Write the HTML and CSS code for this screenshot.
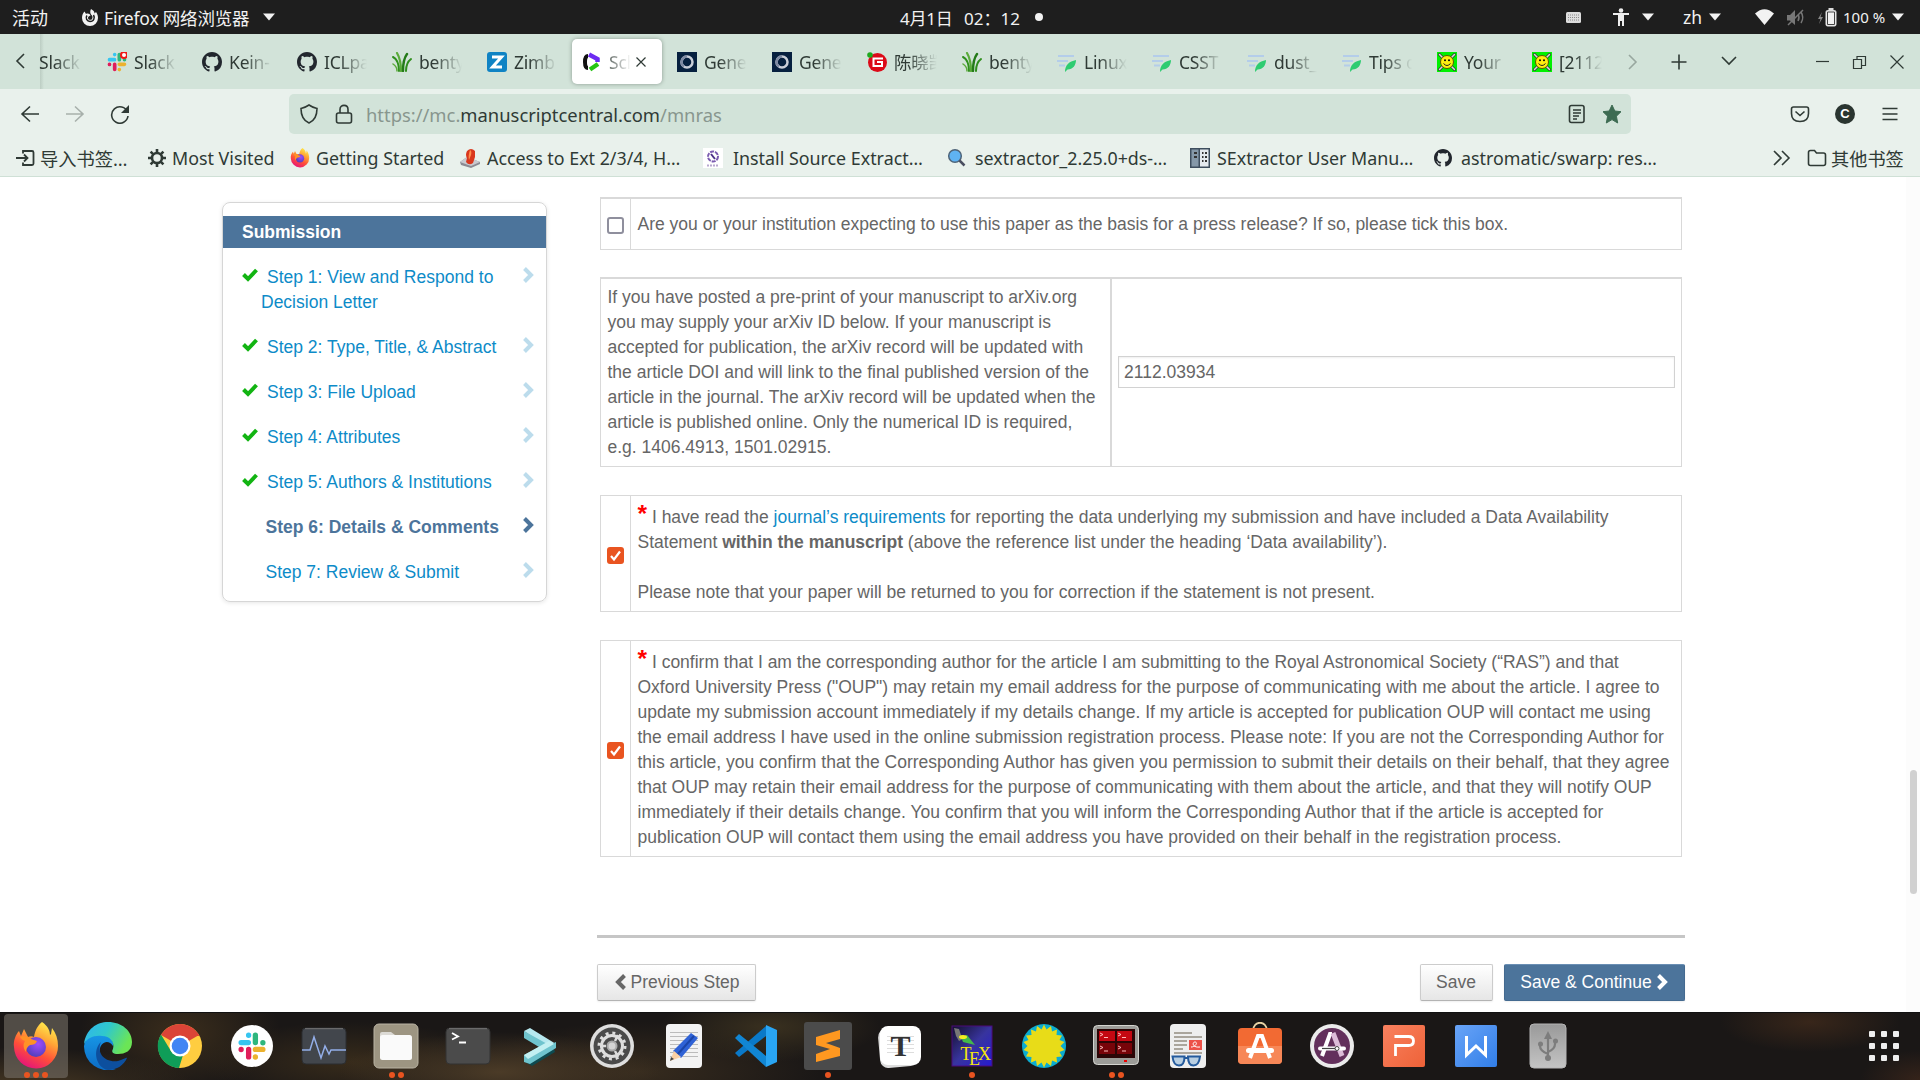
FILE: index.html
```html
<!DOCTYPE html>
<html lang="zh">
<head>
<meta charset="utf-8">
<title>ScholarOne Manuscripts</title>
<link rel="stylesheet" href="styles.css">
</head>
<body>
<svg class="defs" width="0" height="0">
  <symbol id="github" viewBox="0 0 16 16"><path fill="#22272e" d="M8 0C3.58 0 0 3.58 0 8c0 3.54 2.29 6.53 5.47 7.59.4.07.55-.17.55-.38 0-.19-.01-.82-.01-1.49-2.01.37-2.53-.49-2.69-.94-.09-.23-.48-.94-.82-1.13-.28-.15-.68-.52-.01-.53.63-.01 1.08.58 1.23.82.72 1.21 1.87.87 2.33.66.07-.52.28-.87.51-1.07-1.78-.2-3.64-.89-3.64-3.95 0-.87.31-1.59.82-2.15-.08-.2-.36-1.02.08-2.12 0 0 .67-.21 2.2.82.64-.18 1.32-.27 2-.27s1.36.09 2 .27c1.53-1.04 2.2-.82 2.2-.82.44 1.1.16 1.92.08 2.12.51.56.82 1.27.82 2.15 0 3.07-1.87 3.75-3.65 3.95.29.25.54.73.54 1.48 0 1.07-.01 1.93-.01 2.2 0 .21.15.46.55.38A8.01 8.01 0 0 0 16 8c0-4.42-3.58-8-8-8z"/></symbol>
  <symbol id="slack" viewBox="0 0 24 24"><g stroke-width="4.4" stroke-linecap="round" fill="none"><path stroke="#36c5f0" d="M3 9.2h6M9.2 3v.1"/><path stroke="#2eb67d" d="M14.8 3v6.200M21 9.200v.1"/><path stroke="#ecb22e" d="M14.800 14.800H21M14.800 21v.1"/><path stroke="#e01e5a" d="M9.200 14.800V21M3 14.800v.1"/></g></symbol>
  <symbol id="grass" viewBox="0 0 20 20"><g fill="none" stroke="#2f8f1d" stroke-linecap="round"><path stroke-width="2" d="M7 19C7 12 5 7 1 5"/><path stroke-width="2.200" d="M9 19C9 11 8 6 5 1" stroke="#5aab3a"/><path stroke-width="2.400" d="M11 19c0-7 1-13 4-17" stroke="#237a17"/><path stroke-width="2" d="M14 19c0-5 1-9 5-12"/><path stroke-width="1.500" d="M5 19c0-3-1-5-4-7" stroke="#5aab3a"/></g></symbol>
  <symbol id="ring" viewBox="0 0 20 20"><path fill="#06203f" d="M0 0h20v20H0z"/><circle cx="10" cy="10" r="5.500" fill="none" stroke="#c9ced8" stroke-width="2.500"/><path d="M10 4.500a5.500 5.500 0 0 0-3 10" fill="none" stroke="#7e8aa3" stroke-width="2.500"/></symbol>
  <symbol id="leaf" viewBox="0 0 20 20"><path stroke="#b4cdea" stroke-width="2.200" d="M1 4h16M0 9h11M2 13.500h6"/><path fill="#2ecc71" d="M8 20C8 13 12 9.500 19 8c0 5-3 9.500-8.500 9.500z"/></symbol>
  <symbol id="smile" viewBox="0 0 20 20"><path fill="#00f000" d="M0 0h20v20H0z"/><path stroke="#333" stroke-width="3" stroke-linecap="round" d="m2.500 2.500 15 15m0-15-15 15"/><path stroke="#ddd" stroke-width="1.500" stroke-linecap="round" d="m2.500 2.500 15 15m0-15-15 15"/><circle cx="10" cy="10" r="6.500" fill="#ffee10" stroke="#5b5700"/><circle cx="8" cy="8.300" r="1"/><circle cx="12" cy="8.300" r="1"/><path d="M6.500 11.500q3.500 4 7 0" fill="none" stroke="#222"/></symbol>
  <symbol id="firefox" viewBox="0 0 48 48">
    <defs><linearGradient id="ffa" x1=".8" y1="0" x2=".3" y2="1"><stop offset="0" stop-color="#fff44f"/><stop offset=".35" stop-color="#ffa436"/><stop offset=".65" stop-color="#ff4f38"/><stop offset="1" stop-color="#e4127d"/></linearGradient><radialGradient id="ffb" cx=".6" cy=".35" r=".7"><stop offset="0" stop-color="#a04bff"/><stop offset="1" stop-color="#4d3fb8"/></radialGradient></defs>
    <path fill="url(#ffa)" d="M30 0c6 4 8 9 8 13l1-1 1-6c4 5 6 11 6 18a22 22 0 0 1-44 1C1 19 4 12 7 9l2 5 3-7 4 8c2-1 4-1 6 0 1-6 3-11 8-15z"/>
    <circle cx="24" cy="25" r="10" fill="url(#ffb)"/>
    <path fill="#ff9226" d="M8 15c4-2 8-1 11 2l6 2c-1 3-4 4-7 4-3 2-4 4-4 7-3-4-3-8-1-11-2-1-4-2-5-4z"/>
  </symbol>
  <symbol id="caret" viewBox="0 0 12 8"><path fill="currentColor" d="M0 .5h12L6 7.500z"/></symbol>
  <symbol id="chev" viewBox="0 0 11 16"><path fill="none" stroke="currentColor" stroke-width="4" d="m1.500 1.500 6.500 6.500-6.500 6.500"/></symbol>
  <symbol id="check" viewBox="0 0 16 14"><path fill="none" stroke="#12b412" stroke-width="4" d="m1.500 6.500 4.500 4.500 8.500-9"/></symbol>
</svg>

<header class="topbar">
  <span class="tb-act">活动</span>
  <svg class="tb-ff" viewBox="0 0 16 17"><path fill="#f2f2f2" d="M9 0c3 1.500 3.500 3 3.500 4.500L14 3c1.500 2 2 4 2 6A8 8 0 0 1 0 9c0-3 1-5 2.500-6.500L4 5c2-1 4 0 4.500 1.500C7 7 6 8 6 9c0 2 3 2.500 4 1 1-2 .5-3-1-4.500C8 4 8 2 9 0z"/><path fill="none" stroke="#1e1e1e" stroke-width="1.500" d="M5 6.500C3 9 5 12.500 8 12.500c4 0 5-4 3.500-6.500"/></svg>
  <span class="tb-app">Firefox 网络浏览器</span>
  <svg class="tb-caret" width="12" height="8"><use href="#caret"/></svg>
  <span class="tb-date">4月1日</span><span class="tb-time">02：12</span><i class="tb-dot"></i>
  <svg class="tb-kbd" width="15" height="11" viewBox="0 0 15 11"><rect width="15" height="11" rx="1.500" fill="#ddd"/><path stroke="#888" stroke-dasharray="1 1" d="M2 3h11M2 5.500h11M2 8h11"/></svg>
  <svg class="tb-person" width="16" height="18" viewBox="0 0 16 18"><circle cx="8" cy="2.500" r="2.300" fill="#eee"/><path fill="#eee" d="M0 5h16v2h-5v11H9v-5H7v5H5V7H0z"/></svg>
  <svg class="tb-caret2" width="12" height="8"><use href="#caret"/></svg>
  <span class="tb-zh">zh</span>
  <svg class="tb-caret3" width="12" height="8"><use href="#caret"/></svg>
  <svg class="tb-wifi" width="19" height="16" viewBox="0 0 19 16"><path fill="#f2f2f2" d="M0 4.500Q9.500-4 19 4.500L9.500 16z"/></svg>
  <svg class="tb-mute" width="19" height="17" viewBox="0 0 19 17"><path fill="#777" d="M0 6h3l5-5v15l-5-4.500H0z"/><path fill="none" stroke="#777" stroke-width="1.500" d="M11 5q2 3.500 0 7M14 3q3.500 5.500 0 11M1 16 16 1"/></svg>
  <svg class="tb-batt" width="19" height="19" viewBox="0 0 19 19"><path fill="#888" d="M4 4 0 11h2.500L1 16l4-7H2.500z"/><rect x="8" y="2.500" width="10" height="15.500" rx="1.500" fill="#f2f2f2" stroke="#ddd"/><path fill="none" stroke="#444" d="M9.500 4h7v12.500h-7z"/><path fill="#ddd" d="M10.500 0h5v2h-5z"/></svg>
  <span class="tb-pct">100 %</span>
  <svg class="tb-caret4" width="12" height="8"><use href="#caret"/></svg>
</header>

<div class="tabstrip">
  <div class="scroll-left"><svg width="10" height="18" viewBox="0 0 10 18"><path d="M9 2 2 9l7 7" class="ln"/></svg></div>
  <div class="tabs">
    <div class="tab first"><svg><use href="#slack"/></svg><span>Slack</span></div>
    <div class="tab"><svg viewBox="0 0 20 20"><use href="#slack"/><circle cx="17" cy="3" r="3" fill="#fff" stroke="#f01818" stroke-width="2"/></svg><span>Slack</span></div>
    <div class="tab"><svg><use href="#github"/></svg><span>Kein-</span></div>
    <div class="tab"><svg><use href="#github"/></svg><span>ICLpa</span></div>
    <div class="tab"><svg><use href="#grass"/></svg><span>benty</span></div>
    <div class="tab"><svg viewBox="0 0 20 20"><rect width="20" height="20" rx="3" fill="#0f83c4"/><path fill="none" stroke="#fff" stroke-width="3" d="M5 5h9.500L5.500 15H15"/></svg><span>Zimb</span></div>
    <div class="tab active"><svg viewBox="0 0 20 20"><path fill="none" stroke="#111" stroke-width="4" d="M6 4C3.500 4 3 6 3 10s.5 6 3 6"/><path fill="none" stroke="#6c2bf2" stroke-width="4.500" d="m7 2.500 8.500 4.500v3"/><path fill="none" stroke="#26c414" stroke-width="4.500" d="m8 17.500 8-5.500"/></svg><span>Sch</span><svg class="x" viewBox="0 0 10 10"><path class="ln thin" d="m.5.5 9 9m0-9-9 9"/></svg></div>
    <div class="tab"><svg><use href="#ring"/></svg><span>Gene</span></div>
    <div class="tab"><svg><use href="#ring"/></svg><span>Gene</span></div>
    <div class="tab"><svg viewBox="0 0 20 20"><circle cx="10.500" cy="10.500" r="9.500" fill="#dc0a18"/><path fill="none" stroke="#fff" stroke-width="2" d="M16 6.500H6.500V14h8.500v-4H10"/><circle cx="3" cy="3" r="2.800" fill="#1fa81f"/></svg><span>陈晓凯</span></div>
    <div class="tab"><svg><use href="#grass"/></svg><span>benty</span></div>
    <div class="tab"><svg><use href="#leaf"/></svg><span>Linux</span></div>
    <div class="tab"><svg><use href="#leaf"/></svg><span>CSST</span></div>
    <div class="tab"><svg><use href="#leaf"/></svg><span>dust_</span></div>
    <div class="tab"><svg><use href="#leaf"/></svg><span>Tips o</span></div>
    <div class="tab"><svg><use href="#smile"/></svg><span>Your</span></div>
    <div class="tab"><svg><use href="#smile"/></svg><span>[2112</span></div>
  </div>
  <div class="tabctl">
    <svg class="dim" viewBox="0 0 20 20"><path class="ln" d="m6 3 7 7-7 7"/></svg>
    <svg viewBox="0 0 20 20"><path class="ln" d="M10 2.500v15M2.500 10h15"/></svg>
    <svg viewBox="0 0 20 20"><path class="ln" d="m3 5 7 7 7-7"/></svg>
    <svg viewBox="0 0 20 20"><path class="ln thin" d="M4 9.500h13"/></svg>
    <svg viewBox="0 0 20 20"><path class="ln thin" d="M4.500 7.500h8v9h-8zM8 7V4.500h8.500v9H13"/></svg>
    <svg viewBox="0 0 20 20"><path class="ln thin" d="m3.500 3.500 13 13m0-13-13 13"/></svg>
  </div>
</div>

<div class="navbar">
  <div class="navbtns">
    <svg viewBox="0 0 20 20"><path class="ln" d="M19 10H2m8-7.500L2 10l8 7.500"/></svg>
    <svg class="dim" viewBox="0 0 20 20"><path class="ln" d="M1 10h17m-8-7.500 8 7.500-8 7.500"/></svg>
    <svg viewBox="0 0 20 20"><path class="ln" d="M17.500 8A8.200 8.200 0 1 0 18 12"/><path class="fl" d="M19 1v8h-8z"/></svg>
  </div>
  <div class="urlbar">
    <svg class="shield" viewBox="0 0 20 20"><path class="ln" d="M10 1c3 2 5 3 8 3.500 0 7-2 12-8 14.500-6-2.500-8-7.500-8-14.500C5 4 7 3 10 1z"/></svg>
    <svg class="lock" viewBox="0 0 20 20"><path class="ln" d="M4.500 9h11q2 0 2 2v6q0 2-2 2h-11q-2 0-2-2v-6q0-2 2-2zM6 9V5.500C6 0 14 0 14 5.500V9"/></svg>
    <span class="url"><i>https://mc.</i>manuscriptcentral.com<i>/mnras</i></span>
    <svg class="reader" viewBox="0 0 20 20"><rect class="ln" x="2.500" y="1.500" width="14.500" height="17" rx="2"/><path class="ln" d="M6 6h8M6 9h8M6 12h6M6 15h4"/></svg>
    <svg class="star" viewBox="0 0 20 20"><path fill="#3d6b52" stroke="#3d6b52" stroke-linejoin="round" d="m10 1 2.800 6 6.200.7-4.600 4.500 1.300 6.800-5.700-3.400L4.300 19l1.300-6.800L1 7.700 7.200 7z"/></svg>
  </div>
  <div class="navright">
    <svg viewBox="0 0 20 20"><path class="ln" d="M3.500 3h13q2 0 2 2v4.500q0 8-8.500 8t-8.500-8V5q0-2 2-2z"/><path class="ln" d="m5.500 7.500 4.500 4 4.500-4"/></svg>
    <span class="avatar">C</span>
    <svg viewBox="0 0 20 20"><path class="ln" d="M2.500 4.500h15M2.500 10h15M2.500 15.500h15"/></svg>
  </div>
</div>

<div class="bookmarks">
  <div class="bm b1"><svg viewBox="0 0 20 20"><path class="ln w2" d="M8 5.500V3h9q1.500 0 1.500 1.500v11q0 1.500-1.500 1.500H8v-2.500M1 10h11M9 6.500l3.500 3.500L9 13.500"/></svg><span>导入书签…</span></div>
  <div class="bm b2"><svg viewBox="0 0 20 20"><circle class="ln gear" cx="10" cy="10" r="5"/><path class="ln gear" d="M10 1v3.500M10 15.500V19M1 10h3.500M15.500 10H19M3.600 3.600l2.500 2.500M13.900 13.900l2.500 2.500M16.400 3.600l-2.500 2.500M6.100 13.900l-2.500 2.500"/></svg><span>Most Visited</span></div>
  <div class="bm b3"><svg><use href="#firefox"/></svg><span>Getting Started</span></div>
  <div class="bm b4"><svg viewBox="0 0 20 20"><path fill="#8b8b93" d="m0 14 7-5 13 5v2l-9 4L1 17z"/><path fill="#c9c9cf" d="m0 14 7-5 13 5-9 4z"/><path fill="#d9381e" d="M7 3q4-4 8 0v6l-2 6q-4 3-7-1l1-4q-2-3 0-7z"/><path fill="#ff8e4d" d="M10 2q2 1 1 5l-2 5q-1-4 1-10z"/></svg><span>Access to Ext 2/3/4, H…</span></div>
  <div class="bm b5"><svg viewBox="0 0 20 20"><path fill="#fff" d="M0 0h20v20H0z"/><circle cx="10" cy="8.500" r="5" fill="none" stroke="#7b5bb0" stroke-width="2" stroke-dasharray="4 1"/><path d="m8 6 4 5" stroke="#4a2f88" stroke-width="2"/><path stroke="#b7a8cf" stroke-dasharray="2 1" stroke-width="2" d="M4 17.500h12"/></svg><span>Install Source Extract…</span></div>
  <div class="bm b6"><svg viewBox="0 0 20 20"><circle cx="8" cy="8" r="6.300" fill="#5fb3f3" stroke="#4f6478" stroke-width="1.500"/><path stroke="#4a4f60" stroke-width="2.500" d="m12.500 12.500 5 5"/></svg><span>sextractor_2.25.0+ds-…</span></div>
  <div class="bm b7"><svg viewBox="0 0 20 20"><path fill="#3e4e5e" d="M0 0h20v20H0z"/><path fill="#8598a8" d="M1.500 1.500h7v17h-7z"/><path fill="#e4eaee" d="M10 1.500h8.500v17H10z"/><path stroke="#333" stroke-width="2" d="M4 5h3M4 9h3M12 5h1.500M15 5h2M12 9h1.500M15 9h2M12 13h1.500M15 13h2"/></svg><span>SExtractor User Manu…</span></div>
  <div class="bm b8"><svg viewBox="0 0 20 20"><use href="#github" x="1" y="1" width="18" height="18"/></svg><span>astromatic/swarp: res…</span></div>
  <div class="bm b9"><svg viewBox="0 0 20 20"><path class="ln" d="m2 3 7 7-7 7m8-14 7 7-7 7"/></svg></div>
  <div class="bm b10"><svg viewBox="0 0 20 20"><path class="ln" d="M1.500 4.500q0-2 2-2h4l2 2.500h7q2 0 2 2v8.500q0 2-2 2h-13q-2 0-2-2z"/></svg><span>其他书签</span></div>
</div>

<main class="page">
  <aside class="side">
    <h2>Submission</h2>
    <ul>
      <li><svg class="ck"><use href="#check"/></svg><a>Step 1: View and Respond to<br><b class="out">Decision Letter</b></a><svg class="cv"><use href="#chev"/></svg></li>
      <li><svg class="ck"><use href="#check"/></svg><a>Step 2: Type, Title, &amp; Abstract</a><svg class="cv"><use href="#chev"/></svg></li>
      <li><svg class="ck"><use href="#check"/></svg><a>Step 3: File Upload</a><svg class="cv"><use href="#chev"/></svg></li>
      <li><svg class="ck"><use href="#check"/></svg><a>Step 4: Attributes</a><svg class="cv"><use href="#chev"/></svg></li>
      <li><svg class="ck"><use href="#check"/></svg><a>Step 5: Authors &amp; Institutions</a><svg class="cv"><use href="#chev"/></svg></li>
      <li class="nock cur"><a>Step 6: Details &amp; Comments</a><svg class="cv"><use href="#chev"/></svg></li>
      <li class="nock"><a>Step 7: Review &amp; Submit</a><svg class="cv"><use href="#chev"/></svg></li>
    </ul>
  </aside>
  <section class="form">
    <div class="box press">
      <div class="cell-ck"><i class="cb"></i></div>
      <div class="cell">Are you or your institution expecting to use this paper as the basis for a press release? If so, please tick this box.</div>
    </div>
    <div class="box arxiv">
      <div class="cell">If you have posted a pre-print of your manuscript to arXiv.org<br>you may supply your arXiv ID below. If your manuscript is<br>accepted for publication, the arXiv record will be updated with<br>the article DOI and will link to the final published version of the<br>article in the journal. The arXiv record will be updated when the<br>article is published online. Only the numerical ID is required,<br>e.g. 1406.4913, 1501.02915.</div>
      <div class="cell-in"><div class="inp">2112.03934</div></div>
    </div>
    <div class="box data">
      <div class="cell-ck"><i class="cb on"><svg viewBox="0 0 17 17"><path d="m4 9 3 3.500 6-8"/></svg></i></div>
      <div class="cell"><em>*</em> I have read the <a>journal’s requirements</a> for reporting the data underlying my submission and have included a Data Availability<br>Statement <b>within the manuscript</b> (above the reference list under the heading ‘Data availability’).<br><br>Please note that your paper will be returned to you for correction if the statement is not present.</div>
    </div>
    <div class="box oup">
      <div class="cell-ck"><i class="cb on"><svg viewBox="0 0 17 17"><path d="m4 9 3 3.500 6-8"/></svg></i></div>
      <div class="cell"><em>*</em> I confirm that I am the corresponding author for the article I am submitting to the Royal Astronomical Society (“RAS”) and that<br>Oxford University Press ("OUP") may retain my email address for the purpose of communicating with me about the article. I agree to<br>update my submission account immediately if my details change. If my article is accepted for publication OUP will contact me using<br>the email address I have used in the online submission registration process. Please note: If you are not the Corresponding Author for<br>this article, you confirm that the Corresponding Author has given you permission to submit their details on their behalf, that they agree<br>that OUP may retain their email address for the purpose of communicating with them about the article, and that they will notify OUP<br>immediately if their details change. You confirm that you will inform the Corresponding Author that if the article is accepted for<br>publication OUP will contact them using the email address you have provided on their behalf in the registration process.</div>
    </div>
    <div class="actions">
      <div class="btn prev"><svg class="flip"><use href="#chev"/></svg>Previous Step</div>
      <div class="btn save">Save</div>
      <div class="btn go">Save &amp; Continue<svg><use href="#chev"/></svg></div>
    </div>
  </section>
  <div class="track"><i></i></div>
</main>

<footer class="dock">
  <div class="app focus"><svg viewBox="0 0 48 48"><use href="#firefox"/></svg><u><i></i><i></i><i></i></u></div>
  <div class="app"><svg viewBox="0 0 48 48"><defs><linearGradient id="ea" x2="1" y2=".4"><stop stop-color="#2fb4f0"/><stop offset=".5" stop-color="#30c8cc"/><stop offset="1" stop-color="#6be556"/></linearGradient><linearGradient id="eb" x2="0" y2="1"><stop stop-color="#1899e8"/><stop offset="1" stop-color="#0c6bc4"/></linearGradient></defs><path fill="url(#eb)" d="M0 24C2 12 12 8 20 12c8 3 10 8 9 12-5-8-15-3-13 8 1 9 8 15 16 15A24 24 0 0 1 0 24z"/><path fill="#0d4f9e" d="M17 20c-5 11 4 21 17 19 5-1 8-4 9-3-3 7-10 12-19 12C12 46 8 28 17 20z"/><path fill="url(#ea)" d="M0 22C2 7 13 0 24 0c14 0 24 9 24 20 0 9-7 12-14 12-5 0-7-2-5-5 2-7-3-13-11-13C10 13 3 16 0 22z"/></svg></div>
  <div class="app"><svg viewBox="0 0 48 48"><circle cx="24" cy="24" r="22" fill="#ffcd40"/><path fill="#db4437" d="M24 24 5 13a22 22 0 0 1 38 0z"/><path fill="#db4437" d="M24 14h19.500L38 8 24 3z"/><path fill="#0f9d58" d="M5 12.500 15.500 30 27 33l-4 13A22 22 0 0 1 5 12.500z"/><circle cx="24" cy="24" r="10.500" fill="#fff"/><circle cx="24" cy="24" r="8.300" fill="#4285f4"/></svg></div>
  <div class="app"><svg viewBox="0 0 48 48"><circle cx="24" cy="24" r="21" fill="#fff"/><use href="#slack" x="9.500" y="9.500" width="29" height="29"/></svg></div>
  <div class="app"><svg viewBox="0 0 48 48"><rect x="2" y="6" width="44" height="36" rx="4" fill="#42464c" stroke="#2b2d30"/><path stroke="#777" d="M5 6.700h38"/><path fill="none" stroke="#93aee8" stroke-width="1.500" d="M2 28h8l4-13 7 21 4-12 4 8 2-4h15"/></svg></div>
  <div class="app"><svg viewBox="0 0 48 48"><rect x="2" y="2" width="44" height="44" rx="5" fill="#9d9582" stroke="#b9b3a3"/><path fill="#dcdad5" d="M8 17v-5q0-2 2-2h9l4 3v4z"/><rect x="8" y="13" width="32" height="25" rx="2.500" fill="#fafafa"/></svg><u><i></i><i></i></u></div>
  <div class="app"><svg viewBox="0 0 48 48"><rect x="2" y="6" width="44" height="36" rx="4" fill="#4b4b4b" stroke="#333"/><path stroke="#777" d="M5 6.700h38"/><path fill="none" stroke="#fff" stroke-width="1.800" d="m8 11 6 3.500-6 3M15 20.500h7"/></svg></div>
  <div class="app"><svg viewBox="0 0 48 48"><path fill="#0e4a50" d="m9 40 7 4 23-14-2-6z"/><path fill="#b6e8ef" d="m8 9 6-3 26 16-7 5z"/><path fill="#6fc4ce" d="M8 9v7l15 9-15 8v7l6 2 26-16v-6l-7 3z"/><path fill="#c3f0f2" d="m8 33 25-14 5 3-26 15z"/></svg></div>
  <div class="app"><svg viewBox="0 0 48 48"><circle cx="24" cy="24" r="22" fill="#dedede"/><circle cx="24" cy="24" r="18.500" fill="#4a4a4a"/><circle cx="24" cy="24" r="13" fill="none" stroke="#ddd" stroke-width="3" stroke-dasharray="3 3.800"/><circle cx="24" cy="24" r="10.500" fill="none" stroke="#ddd" stroke-width="3"/><path stroke="#ddd" stroke-width="2.500" d="M18 24h-6M27 19l3-6M27 29l3 6"/><circle cx="24" cy="24" r="4.500" fill="#d5d5d5" stroke="#aaa" stroke-width="2"/></svg></div>
  <div class="app"><svg viewBox="0 0 48 48"><rect x="6" y="2" width="36" height="44" rx="4" fill="#f3f3f3"/><path stroke="#bbb" d="M10 10.500h28M10 14.500h28M10 18.500h28M10 22.500h28M10 26.500h28M10 30.500h28M10 34.500h28"/><path fill="#2f62d6" d="m31 11 7 5-17 20-8-7z"/><path stroke="#1c46a8" stroke-width="2" d="m34 14-17 19"/><path fill="#fbd0a5" d="m14 29 7 6-11 4z"/><path fill="#444" d="m11 35 3 2-4 2z"/></svg></div>
  <div class="app"><svg viewBox="0 0 48 48"><path fill="#0a79c8" d="m3 31 4 4 27-21V4z"/><path fill="#1186d4" d="m3 16 4-4 27 22v11z"/><path fill="#29a5f3" d="m34 3 11 5v32l-11 5z"/></svg></div>
  <div class="app"><svg viewBox="0 0 48 48"><rect width="48" height="48" rx="3" fill="#4b4b4b"/><path fill="#ff9820" d="m12 15 24-7v9l-14 4 14 5v8l-24 6v-8l14-5-14-4z"/></svg><u><i></i></u></div>
  <div class="app"><svg viewBox="0 0 48 48"><rect x="3" y="6" width="38" height="39" rx="8" fill="#ddd" transform="rotate(-5 22 25)"/><rect x="4" y="4" width="41" height="39" rx="8" fill="#fff"/><path stroke="#ddd" d="M11 14.500h27M11 18.500h27M11 22.500h27M11 26.500h27M11 30.500h27"/><text x="24.500" y="34" text-anchor="middle" class="typ">T</text></svg></div>
  <div class="app"><svg viewBox="0 0 48 48"><defs><linearGradient id="tx" x2="1" y2="1"><stop stop-color="#15102c"/><stop offset=".5" stop-color="#38349e"/><stop offset="1" stop-color="#251ad0"/></linearGradient></defs><rect x="4" y="4" width="40" height="40" fill="url(#tx)" stroke="#4c0b7c"/><path fill="#777" d="m6 6 5 1 2 6 6 2-8 4-3-5z"/><path fill="#42b94a" d="m13 15 6-2 8 10-12-3z"/><ellipse cx="15" cy="15" rx="4" ry="2" fill="#f2ee20"/><text x="12.500" y="38" class="tex">T</text><text x="21" y="43" class="tex">E</text><text x="30" y="38" class="tex">X</text></svg><u><i></i></u></div>
  <div class="app"><svg viewBox="0 0 48 48"><circle cx="24" cy="24" r="22" fill="#0bacd0"/><circle cx="24" cy="24" r="14" fill="#e8dc18"/><path fill="#e8dc18" d="M24 2.500l2.500 5 4.500-3.500 1 5.500 5-2-.5 5.500 5.500.5-2.500 4.500 5 2-4 4 4 4-5 2 2.500 4.500-5.500.5.500 5.500-5-2-1 5.500-4.500-3.500-2.500 5-2.500-5-4.500 3.500-1-5.500-5 2 .5-5.500-5.500-.5L8.500 30l-5-2 4-4-4-4 5-2L6 13.500l5.500-.5-.5-5.500 5 2 1-5.500 4.500 3.500z"/></svg></div>
  <div class="app"><svg viewBox="0 0 48 48"><rect x="1.500" y="3.500" width="45" height="39" rx="4" fill="#9c9c98" stroke="#d5d5d0"/><rect x="5" y="7" width="38" height="29" fill="#2b0606"/><path fill="#c40812" d="M7 9h16v10H7zM25 9h15v10H25z"/><path fill="#780409" d="M7 21h16v11H7zM25 21h15v11H25z"/><path fill="none" stroke="#fbb" d="m8 11 3 1.500L8 14M12 15.500h4M26 11l3 1.500-3 1.500M30 15.500h4M8 24l3 1.500L8 27M12 29h4M26 24l3 1.500-3 1.500M30 29h4"/><path fill="#e00" d="M32 38h3v2h-3z"/></svg><u><i></i><i></i></u></div>
  <div class="app"><svg viewBox="0 0 48 48"><rect x="6" y="2" width="36" height="44" rx="4" fill="#eee"/><path stroke="#aaa59c" stroke-width="2" d="M10 11h18M10 15h28M10 19h13M10 23h13M10 27h9M10 31h28"/><path fill="#ec5148" d="M25 18h13v10H25z"/><path fill="none" stroke="#fff" d="M27 25c5 0 7-5 4-5s-3 6 5 5"/><path fill="#b9cfe2" stroke="#255b9d" stroke-width="2" d="M8.500 34.500h12q0 9-5.500 9t-6.500-9zM24 34.500h12q-1 9-6.500 9t-5.500-9zM20 36h4"/></svg></div>
  <div class="app"><svg viewBox="0 0 48 48"><path fill="none" stroke="#e9d3a5" stroke-width="1.800" d="M17 9c0-11 14-11 14 0"/><rect x="2" y="6" width="44" height="36" rx="4" fill="#f26a33"/><path fill="#f78757" d="M2 24h44v14q0 4-4 4H6q-4 0-4-4z"/><path stroke="#fff" stroke-width="4" fill="none" d="m14 36 8-22h4l8 22"/><path stroke="#fff" stroke-width="5" stroke-linecap="round" d="M12.500 28.500h23"/></svg></div>
  <div class="app"><svg viewBox="0 0 48 48"><circle cx="24" cy="24" r="22" fill="#ebebeb"/><circle cx="24" cy="24" r="18" fill="#63305c"/><path stroke="#fff" stroke-width="4" fill="none" d="m14 34 8-22h2"/><path stroke="#dcbcd8" stroke-width="5" d="m25 11 9 23"/><path stroke="#fff" stroke-width="4" stroke-linecap="round" d="M12 26.500h24"/><path stroke="#444" stroke-width="1.200" d="M14 26.500h14"/><circle cx="29" cy="26.500" r="2" fill="#fff" stroke="#444"/></svg></div>
  <div class="app"><svg viewBox="0 0 48 48"><defs><linearGradient id="wp" x2="1" y2="1"><stop stop-color="#f9815f"/><stop offset="1" stop-color="#ee6238"/></linearGradient><linearGradient id="ww" x2="1" y2="1"><stop stop-color="#69a4f7"/><stop offset="1" stop-color="#317ee8"/></linearGradient></defs><rect x="3" y="3" width="42" height="42" rx="2" fill="url(#wp)"/><path fill="none" stroke="#fff" stroke-width="2.800" d="M14.500 14.500h14q5 0 5 4.500t-5 4.500H15.500V34"/></svg></div>
  <div class="app"><svg viewBox="0 0 48 48"><rect x="3" y="3" width="42" height="42" rx="2" fill="url(#ww)"/><path fill="none" stroke="#fff" stroke-width="3" d="M14.500 14v19L24 24l9.500 9V14"/></svg></div>
  <div class="app"><svg viewBox="0 0 48 48"><defs><linearGradient id="us" x2="0" y2="1"><stop stop-color="#999"/><stop offset="1" stop-color="#c4c4c4"/></linearGradient></defs><rect x="6" y="2" width="36" height="44" rx="4" fill="url(#us)" stroke="#b5b5b5"/><path fill="none" stroke="#7d7d7d" stroke-width="2.200" d="M24 13v23M16 22v2q0 5 8 8M31 20v2q0 5-7 8"/><path fill="#7d7d7d" d="m24 9 4 8h-8z"/><circle cx="16.500" cy="22" r="2.500" fill="#7d7d7d"/><circle cx="31.500" cy="19" r="2.500" fill="#7d7d7d"/><circle cx="24" cy="36" r="3" fill="#7d7d7d"/></svg></div>
  <div class="apps"><i></i><i></i><i></i><i></i><i></i><i></i><i></i><i></i><i></i></div>
</footer>
</body>
</html>
```
FILE: styles.css
```css
* { box-sizing: border-box; }
body { margin: 0; width: 1920px; height: 1080px; overflow: hidden; background: #fff; display: flex; flex-direction: column; font-family: "Noto Sans", "Noto Sans CJK SC", sans-serif; }
svg { display: block; flex: none; }
.defs { position: absolute; }
i, em { font-style: normal; }
.ln { fill: none; stroke: #2f3a35; stroke-width: 1.6; }
.ln.thin { stroke-width: 1.2; }
.ln.w2 { stroke-width: 1.8; }
.ln.gear { stroke-width: 2.6; }
.fl { fill: #2f3a35; }
.dim { opacity: .35; }

/* system bar */
.topbar { height: 34px; flex: none; background: #1e1e1e; color: #f2f2f2; display: flex; align-items: center; padding: 0 0 0 12px; font-size: 17px; white-space: nowrap; }
.topbar > * { flex: none; }
.tb-act { width: 70px; font-size: 18px; }
.tb-ff { width: 16px; height: 17px; margin-right: 6px; }
.tb-app { width: 159px; font-size: 17.500px; }
.tb-app, .tb-date { letter-spacing: -.2px; }
.tb-app { overflow: visible; }
.tb-date { width: 64px; margin-left: 625px; }
.tb-time { width: 71px; }
.tb-dot { width: 8px; height: 8px; border-radius: 50%; background: #f2f2f2; }
.tb-kbd { margin-left: 523px; }
.tb-person { margin-left: 32px; }
.tb-caret2 { margin-left: 13px; }
.tb-zh { margin-left: 29px; width: 26px; font-size: 17.500px; }
.tb-wifi { margin-left: 34px; }
.tb-mute { margin-left: 13px; }
.tb-batt { margin-left: 12px; }
.tb-pct { margin-left: 6px; width: 49px; font-size: 15px; }

/* tab strip */
.tabstrip { height: 55px; flex: none; background: #d2e3d9; display: flex; color: #2f3a35; }
.scroll-left { width: 38px; display: flex; align-items: center; padding: 0 0 1px 15px; }
.tabs { width: 1577px; display: flex; overflow: hidden; background: linear-gradient(90deg, #d2e3d9 2px, #bccdc3 2px, #d2e3d9 6px); }
.tab { width: 95px; flex: none; display: flex; align-items: center; padding: 0 0 0 12.5px; font-size: 17.500px; }
.tab.first { margin-left: -38.5px; }
.tab svg { width: 20px; height: 20px; }
.tab span { width: 43px; margin-left: 7px; overflow: hidden; white-space: nowrap; letter-spacing: -.2px; -webkit-mask-image: linear-gradient(90deg, #000 35%, transparent); mask-image: linear-gradient(90deg, #000 35%, transparent); }
.tab.active { width: 90px; margin: 5px 2.5px; padding: 0 0 0 10px; background: #fff; border-radius: 5px; box-shadow: 0 0 4px #8a9a90; }
.tab.active span { width: 22px; -webkit-mask-image: linear-gradient(90deg, #000b, transparent); mask-image: linear-gradient(90deg, #000b, transparent); }
.tab.active .x { width: 10px; height: 10px; margin-left: 5px; }
.tabctl { display: flex; align-items: center; }
.tabctl svg { width: 20px; height: 20px; margin-left: 26px; }
.tabctl svg:nth-child(1) { margin-left: 8px; }
.tabctl svg:nth-child(3) { margin-left: 30px; }
.tabctl svg:nth-child(4) { margin-left: 73px; }
.tabctl svg:nth-child(5) { margin-left: 17px; }
.tabctl svg:nth-child(6) { margin-left: 18px; }

/* navigation */
.navbar { height: 50px; flex: none; background: #e9f1ec; display: flex; align-items: center; }
.navbtns { display: flex; gap: 25px; width: 289px; padding-left: 20px; }
.navbtns svg, .navright svg { width: 20px; height: 20px; }
.urlbar { width: 1342px; height: 40px; background: #d2e3d9; border-radius: 5px; display: flex; align-items: center; padding-left: 10px; }
.urlbar svg { width: 20px; height: 20px; }
.lock { margin: 0 12px 0 15px; }
.url { width: 1201px; font-size: 18.400px; color: #2f3a35; }
.url i { color: #88968e; }
.star { margin-left: 15px; }
.navright { display: flex; align-items: center; gap: 25px; padding-left: 159px; }
.avatar { width: 20px; height: 20px; border-radius: 50%; background: #2a3530; color: #fff; font: bold 13px/20px "Liberation Sans", sans-serif; text-align: center; }

/* bookmarks */
.bookmarks { height: 38px; flex: none; background: #e9f1ec; border-bottom: 1px solid #cfe0d6; display: flex; align-items: center; padding: 0 0 0 15px; color: #2f3a35; font-size: 17.850px; }
.bm { display: flex; align-items: center; white-space: nowrap; flex: none; }
.bm svg { width: 20px; height: 20px; margin-right: 6px; }
.b1 { width: 132px; } .b2 { width: 143px; } .b3 { width: 170px; } .b4 { width: 243px; } .b5 { width: 244px; }
.b6 { width: 243px; } .b7 { width: 243px; } .b8 { width: 339px; } .b9 { width: 35px; }
.bm.b1 svg, .bm.b2 svg { margin-right: 5px; }
.b1 span { font-size: 18.300px; }
.b4 svg { margin-right: 7px; }
.b5 svg { margin-right: 10px; }
.b6 svg, .b8 svg { margin-right: 8px; }
.b7 svg { margin-right: 7px; }
.bm.b10 svg { margin-right: 4px; }
.b10 span { font-size: 18.200px; }

/* manuscript page */
.page { height: 835px; flex: none; display: flex; font: 17.5px/25px "Liberation Sans", Arial, sans-serif; color: #666; }
.page a { color: #0d8bc8; }
.side { width: 325px; height: 400px; margin: 25px 50px 0 222px; padding-top: 13px; border: 1px solid #d6d6d6; border-radius: 8px; box-shadow: 0 1px 4px #0000001a; }
.side h2 { margin: 0; height: 32px; background: #4c749b; color: #fff; font-size: 17.5px; line-height: 32px; padding-left: 19px; }
.side ul { margin: 7px 0 0; padding: 0; list-style: none; }
.side li { display: flex; align-items: flex-start; padding: 10px 12.5px 10px 19px; }
.side li a { margin-left: 9px; flex: 1; white-space: nowrap; }
.out { font-weight: normal; margin-left: -6px; }
.ck { width: 16px; height: 14px; margin-top: 3px; }
.cv { width: 11px; height: 16px; margin-top: 2px; color: #bcdcec; }
.side .nock { padding-left: 33.5px; }
.side .cur a { color: #4c749b; font-weight: bold; }
.cur .cv { color: #4c749b; }

.form { width: 1088px; padding-top: 20px; }
.box { width: 1082px; margin-left: 3px; border: 1px solid #d9d9d9; display: flex; white-space: nowrap; }
.cell-ck { width: 30px; border-right: 1px solid #d9d9d9; display: flex; align-items: center; justify-content: center; }
.cell { padding: 0 6px 0 6.500px; }
.press { height: 53px; border-top-width: 2px; }
.press .cell { padding-top: 13px; }
.press .cell-ck { padding-top: 2px; }
.arxiv { height: 190px; margin-top: 27px; border-top-width: 2px; }
.arxiv .cell { width: 511px; border-right: 2px solid #d9d9d9; padding-top: 6px; }
.cell-in { flex: 1; display: flex; align-items: center; padding: 0 6px 1px; }
.inp { flex: 1; height: 32px; line-height: 30px; border: 1px solid #d2d2d2; box-shadow: inset 0 1px 2px #0001; padding-left: 5px; }
.data { height: 117px; margin-top: 28px; }
.data .cell, .oup .cell { padding-top: 9px; }
.oup { height: 217px; margin-top: 28px; }
.cell em { color: #f00; font-size: 24.500px; font-weight: bold; line-height: 0; position: relative; top: -1px; }
.cb { width: 17px; height: 17px; border: 2px solid #8f8f9d; border-radius: 3px; background: #fff; }
.cb.on { border: 0; background: #e95420; margin-top: 3px; }
.cb path { fill: none; stroke: #fff; stroke-width: 2.2; }
.actions { margin-top: 78px; border-top: 3px solid #c6c6c6; padding-top: 26px; display: flex; }
.btn { height: 37px; border: 1px solid #ccc; border-bottom-color: #b3b3b3; border-radius: 2px; background: linear-gradient(#fff, #e6e6e6); box-shadow: 0 1px 2px #0001; display: flex; align-items: center; justify-content: center; white-space: nowrap; }
.btn svg { width: 11px; height: 16px; margin: 0 0 2px 5px; }
.btn .flip { transform: scaleX(-1); margin: 0 5px 2px 0; }
.prev { width: 159px; padding-left: 1px; }
.save { width: 73px; margin-left: 664px; padding-right: 1px; }
.go { width: 181px; margin-left: 11px; padding-right: 1px; color: #fff; background: #4c749b; border-color: #6a8fb4 #446a90 #446a90; }
.track { width: 14px; margin-left: auto; background: #fcfcfc; padding: 593px 3px 0 4px; }
.track i { display: block; height: 124px; border-radius: 4px; background: #d0d0d0; }

/* launcher */
.dock { height: 68px; flex: none; display: flex; align-items: center; box-shadow: inset 0 1px #111; background: radial-gradient(ellipse 180px 45px at 20px 80px, #4b3b24, transparent), radial-gradient(ellipse 100px 60px at 180px 20px, #3a2d1c, transparent), radial-gradient(ellipse 160px 40px at 500px 60px, #4b3b27, transparent), radial-gradient(ellipse 110px 35px at 770px 15px, #39301f, transparent), radial-gradient(ellipse 180px 50px at 640px 60px, #362b1e, transparent), radial-gradient(ellipse 150px 40px at 350px 50px, #372b1b, transparent), radial-gradient(ellipse 90px 30px at 1810px 10px, #38261a, transparent), radial-gradient(ellipse 60px 30px at 1920px 68px, #35231a, transparent), #1a1716; }
.app { width: 64px; height: 64px; margin: 0 4px; flex: none; border-radius: 4px; display: grid; place-items: center; position: relative; }
.app svg { width: 48px; height: 48px; }
.focus { background: #77706899; }
.app u { position: absolute; left: 0; right: 0; bottom: 0; display: flex; justify-content: center; gap: 3px; text-decoration: none; }
.app u i { width: 6px; height: 6px; border-radius: 50%; background: #e95420; }
.typ { font: bold 30px "Liberation Serif", serif; fill: #333; }
.tex { font: 18px "Liberation Serif", serif; fill: #f3e50c; }
.apps { margin: 0 21px 0 auto; display: grid; grid-template-columns: repeat(3, 6px); gap: 6px; }
.apps i { width: 6px; height: 6px; background: #eee; border-radius: 1px; }
```
